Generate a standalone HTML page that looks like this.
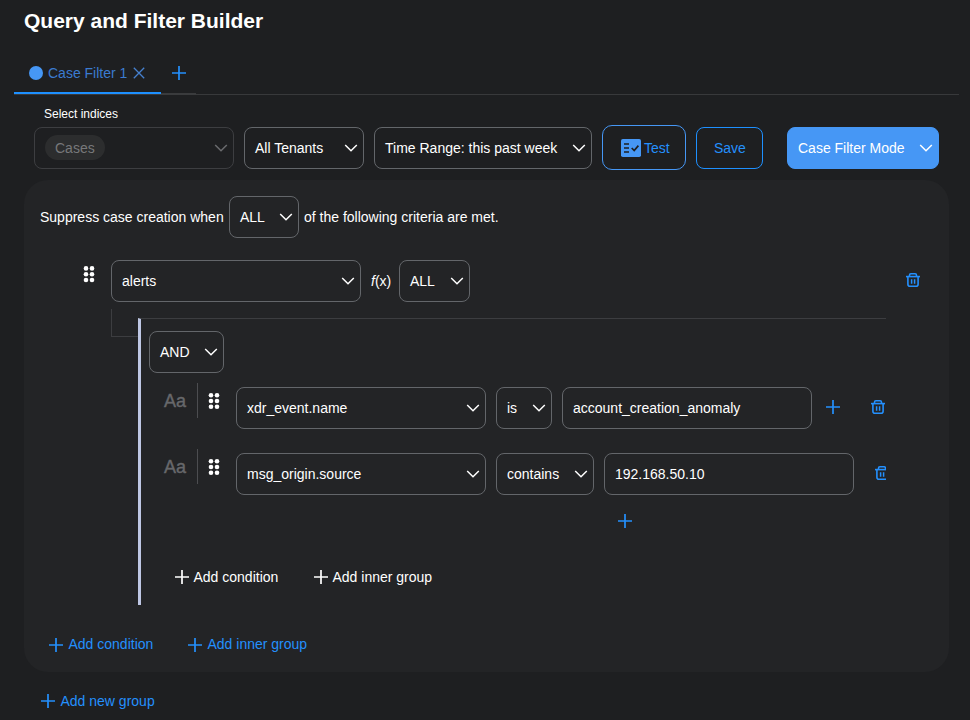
<!DOCTYPE html>
<html><head><meta charset="utf-8">
<style>
*{box-sizing:border-box;margin:0;padding:0}
html,body{width:970px;height:720px;overflow:hidden;background:#1e1f21;font-family:"Liberation Sans",Arial,sans-serif;color:#fff}
.a{position:absolute}
.t{position:absolute;white-space:nowrap;line-height:1;font-size:14px}
.sel{position:absolute;border:1px solid #63666a;border-radius:8px;font-size:14px;color:#fff}
.sel span{position:absolute;top:13px;line-height:1;white-space:nowrap}
.sel svg{position:absolute;right:5px;top:13px}
</style></head><body>
<div class="t" style="left:24px;top:10px;font-size:21px;font-weight:bold">Query and Filter Builder</div>

<div class="a" style="left:29px;top:66px;width:14px;height:14px;border-radius:50%;background:#4697f5"></div>
<div class="t" style="left:48px;top:66px;color:#3b7bd0">Case Filter 1</div>
<svg class="a" style="left:133px;top:67px" width="12" height="12" viewBox="0 0 12 12"><path d="M0.8 0.8L11.2 11.2M11.2 0.8L0.8 11.2" stroke="#4680cf" stroke-width="1.3" fill="none"/></svg>
<svg class="a" style="left:172.0px;top:66.0px" width="14" height="14" viewBox="0 0 14 14"><path d="M7.0 0V14M0 7.0H14" stroke="#2490fd" stroke-width="1.7" fill="none"/></svg>

<div class="a" style="left:14px;top:94px;width:945px;height:1px;background:#38393b"></div>
<div class="a" style="left:161px;top:93px;width:35px;height:2px;background:#3a3b3d"></div>
<div class="a" style="left:14px;top:92px;width:147px;height:2px;background:#1e90ff"></div>

<div class="t" style="left:44px;top:108px;font-size:12px">Select indices</div>
<div class="sel" style="left:34px;top:127px;width:200px;height:42px;border-color:#3d3e41">
  <div class="a" style="left:10px;top:7px;width:60px;height:25px;border-radius:13px;background:#2c2d2e"></div>
  <span style="left:20px;color:#77787a">Cases</span><svg width="14" height="14" viewBox="0 0 14 14"><path d="M1.2 4L7 9.8L12.8 4" stroke="#6a6b6e" stroke-width="1.5" fill="none"/></svg></div>
<div class="sel" style="left:244px;top:127px;width:120px;height:42px;"><span style="left:10px">All Tenants</span><svg width="14" height="14" viewBox="0 0 14 14"><path d="M1.2 4L7 9.8L12.8 4" stroke="#fff" stroke-width="1.5" fill="none"/></svg></div>
<div class="sel" style="left:374px;top:127px;width:218px;height:42px;"><span style="left:10px">Time Range: this past week</span><svg width="14" height="14" viewBox="0 0 14 14"><path d="M1.2 4L7 9.8L12.8 4" stroke="#fff" stroke-width="1.5" fill="none"/></svg></div>
<div class="sel" style="left:602px;top:125px;width:84px;height:45px;border-color:#4697f5;border-radius:10px"><span style="left:41px;top:15px;color:#2490fd">Test</span>
  <svg style="left:18px;top:13px;right:auto" width="20" height="18" viewBox="0 0 20 18"><rect x="0" y="0" width="20" height="18" rx="1.8" fill="#4697f5"/><path d="M3 5H8M3 9H8M3 13H8" stroke="#1e1f21" stroke-width="1.7"/><path d="M10.7 9L13.2 11.5L17.4 6.6" stroke="#1e1f21" stroke-width="1.7" fill="none"/></svg>
</div>
<div class="sel" style="left:696px;top:127px;width:67px;height:42px;border-color:#1e90ff"><span style="left:17px;color:#2490fd">Save</span></div>
<div class="sel" style="left:787px;top:127px;width:152px;height:42px;background:#4697f5;border-color:#4697f5"><span style="left:10px">Case Filter Mode</span><svg width="14" height="14" viewBox="0 0 14 14"><path d="M1.2 4L7 9.8L12.8 4" stroke="#fff" stroke-width="1.5" fill="none"/></svg></div>

<div class="a" style="left:24px;top:180px;width:925px;height:492px;border-radius:24px;background:#232426"></div>
<div class="t" style="left:40px;top:210px">Suppress case creation when</div>
<div class="sel" style="left:229px;top:196px;width:70px;height:42px;"><span style="left:10px">ALL</span><svg width="14" height="14" viewBox="0 0 14 14"><path d="M1.2 4L7 9.8L12.8 4" stroke="#fff" stroke-width="1.5" fill="none"/></svg></div>
<div class="t" style="left:304px;top:210px">of the following criteria are met.</div>
<svg class="a" style="left:83px;top:265px" width="12" height="18" viewBox="0 0 12 18"><circle cx="3" cy="3.4" r="2.3" fill="#fff"/><circle cx="3" cy="9.2" r="2.3" fill="#fff"/><circle cx="3" cy="15.0" r="2.3" fill="#fff"/><circle cx="9" cy="3.4" r="2.3" fill="#fff"/><circle cx="9" cy="9.2" r="2.3" fill="#fff"/><circle cx="9" cy="15.0" r="2.3" fill="#fff"/></svg>
<div class="sel" style="left:111px;top:260px;width:250px;height:42px;"><span style="left:10px">alerts</span><svg width="14" height="14" viewBox="0 0 14 14"><path d="M1.2 4L7 9.8L12.8 4" stroke="#fff" stroke-width="1.5" fill="none"/></svg></div>
<div class="t" style="left:371px;top:274px"><i>f</i>(x)</div>
<div class="sel" style="left:399px;top:260px;width:71px;height:42px;"><span style="left:10px">ALL</span><svg width="14" height="14" viewBox="0 0 14 14"><path d="M1.2 4L7 9.8L12.8 4" stroke="#fff" stroke-width="1.5" fill="none"/></svg></div>
<svg class="a" style="left:906px;top:273px" width="14" height="15" viewBox="0 0 14 15"><g stroke="#2490fd" stroke-width="1.6" fill="none"><path d="M0 3.6H14"/><path d="M3.5 3.4V2.2Q3.5 0.8 4.9 0.8H9.1Q10.5 0.8 10.5 2.2V3.4"/><path d="M1.9 3.6V11.3Q1.9 13.3 3.9 13.3H10.1Q12.1 13.3 12.1 11.3V3.6"/><path d="M5.6 6.2V10.8M8.6 6.2V10.8" stroke-width="1.5"/></g></svg>
<div class="a" style="left:111px;top:309px;width:27px;height:28px;border-left:1px solid #3c3d40;border-bottom:1px solid #3c3d40"></div>
<div class="a" style="left:138px;top:318px;width:748px;height:287px;border-left:3px solid #bec7e4;border-top:1px solid #3c3d40"></div>
<div class="sel" style="left:149px;top:331px;width:75px;height:42px;"><span style="left:10px">AND</span><svg width="14" height="14" viewBox="0 0 14 14"><path d="M1.2 4L7 9.8L12.8 4" stroke="#fff" stroke-width="1.5" fill="none"/></svg></div>
<div class="t" style="left:164px;top:392px;font-size:18px;color:#67686b;-webkit-text-stroke:0.4px #67686b">Aa</div>
<div class="a" style="left:197px;top:383px;width:1px;height:35px;background:#4c4d50"></div>
<svg class="a" style="left:208px;top:392px" width="12" height="18" viewBox="0 0 12 18"><circle cx="3" cy="3.2" r="2.3" fill="#fff"/><circle cx="3" cy="9.0" r="2.3" fill="#fff"/><circle cx="3" cy="14.8" r="2.3" fill="#fff"/><circle cx="9" cy="3.2" r="2.3" fill="#fff"/><circle cx="9" cy="9.0" r="2.3" fill="#fff"/><circle cx="9" cy="14.8" r="2.3" fill="#fff"/></svg>
<div class="sel" style="left:236px;top:387px;width:250px;height:42px;"><span style="left:10px">xdr_event.name</span><svg width="14" height="14" viewBox="0 0 14 14"><path d="M1.2 4L7 9.8L12.8 4" stroke="#fff" stroke-width="1.5" fill="none"/></svg></div>
<div class="sel" style="left:496px;top:387px;width:56px;height:42px;"><span style="left:10px">is</span><svg width="14" height="14" viewBox="0 0 14 14"><path d="M1.2 4L7 9.8L12.8 4" stroke="#fff" stroke-width="1.5" fill="none"/></svg></div>
<div class="sel" style="left:562px;top:387px;width:250px;height:42px;"><span style="left:10px">account_creation_anomaly</span></div>
<svg class="a" style="left:826.0px;top:400.0px" width="14" height="14" viewBox="0 0 14 14"><path d="M7.0 0V14M0 7.0H14" stroke="#2490fd" stroke-width="1.7" fill="none"/></svg>
<svg class="a" style="left:871px;top:400px" width="14" height="15" viewBox="0 0 14 15"><g stroke="#2490fd" stroke-width="1.6" fill="none"><path d="M0 3.6H14"/><path d="M3.5 3.4V2.2Q3.5 0.8 4.9 0.8H9.1Q10.5 0.8 10.5 2.2V3.4"/><path d="M1.9 3.6V11.3Q1.9 13.3 3.9 13.3H10.1Q12.1 13.3 12.1 11.3V3.6"/><path d="M5.6 6.2V10.8M8.6 6.2V10.8" stroke-width="1.5"/></g></svg>
<div class="t" style="left:164px;top:458px;font-size:18px;color:#67686b;-webkit-text-stroke:0.4px #67686b">Aa</div>
<div class="a" style="left:197px;top:449px;width:1px;height:35px;background:#4c4d50"></div>
<svg class="a" style="left:208px;top:458px" width="12" height="18" viewBox="0 0 12 18"><circle cx="3" cy="3.2" r="2.3" fill="#fff"/><circle cx="3" cy="9.0" r="2.3" fill="#fff"/><circle cx="3" cy="14.8" r="2.3" fill="#fff"/><circle cx="9" cy="3.2" r="2.3" fill="#fff"/><circle cx="9" cy="9.0" r="2.3" fill="#fff"/><circle cx="9" cy="14.8" r="2.3" fill="#fff"/></svg>
<div class="sel" style="left:236px;top:453px;width:250px;height:42px;"><span style="left:10px">msg_origin.source</span><svg width="14" height="14" viewBox="0 0 14 14"><path d="M1.2 4L7 9.8L12.8 4" stroke="#fff" stroke-width="1.5" fill="none"/></svg></div>
<div class="sel" style="left:496px;top:453px;width:98px;height:42px;"><span style="left:10px">contains</span><svg width="14" height="14" viewBox="0 0 14 14"><path d="M1.2 4L7 9.8L12.8 4" stroke="#fff" stroke-width="1.5" fill="none"/></svg></div>
<div class="sel" style="left:604px;top:453px;width:250px;height:42px;"><span style="left:10px">192.168.50.10</span></div>
<svg class="a" style="left:875px;top:466px" width="11" height="15" viewBox="0 0 11 15"><g stroke="#2490fd" stroke-width="1.6" fill="none"><path d="M0 3.6H14"/><path d="M3.5 3.4V2.2Q3.5 0.8 4.9 0.8H9.1Q10.5 0.8 10.5 2.2V3.4"/><path d="M1.9 3.6V11.3Q1.9 13.3 3.9 13.3H10.1Q12.1 13.3 12.1 11.3V3.6"/><path d="M5.6 6.2V10.8M8.6 6.2V10.8" stroke-width="1.5"/></g></svg>
<svg class="a" style="left:618.0px;top:514.0px" width="14" height="14" viewBox="0 0 14 14"><path d="M7.0 0V14M0 7.0H14" stroke="#2490fd" stroke-width="1.7" fill="none"/></svg>
<svg class="a" style="left:174.5px;top:570.0px" width="14" height="14" viewBox="0 0 14 14"><path d="M7.0 0V14M0 7.0H14" stroke="#fff" stroke-width="1.7" fill="none"/></svg>
<div class="t" style="left:193.5px;top:570px">Add condition</div>
<svg class="a" style="left:313.5px;top:570.0px" width="14" height="14" viewBox="0 0 14 14"><path d="M7.0 0V14M0 7.0H14" stroke="#fff" stroke-width="1.7" fill="none"/></svg>
<div class="t" style="left:332.5px;top:570px">Add inner group</div>
<svg class="a" style="left:49.0px;top:637.5px" width="14" height="14" viewBox="0 0 14 14"><path d="M7.0 0V14M0 7.0H14" stroke="#2490fd" stroke-width="1.7" fill="none"/></svg>
<div class="t" style="left:68.5px;top:637px;color:#2490fd">Add condition</div>
<svg class="a" style="left:188.0px;top:637.5px" width="14" height="14" viewBox="0 0 14 14"><path d="M7.0 0V14M0 7.0H14" stroke="#2490fd" stroke-width="1.7" fill="none"/></svg>
<div class="t" style="left:207.5px;top:637px;color:#2490fd">Add inner group</div>
<svg class="a" style="left:41.0px;top:694.0px" width="14" height="14" viewBox="0 0 14 14"><path d="M7.0 0V14M0 7.0H14" stroke="#2490fd" stroke-width="1.7" fill="none"/></svg>
<div class="t" style="left:60.5px;top:694px;color:#2490fd">Add new group</div>
</body></html>
